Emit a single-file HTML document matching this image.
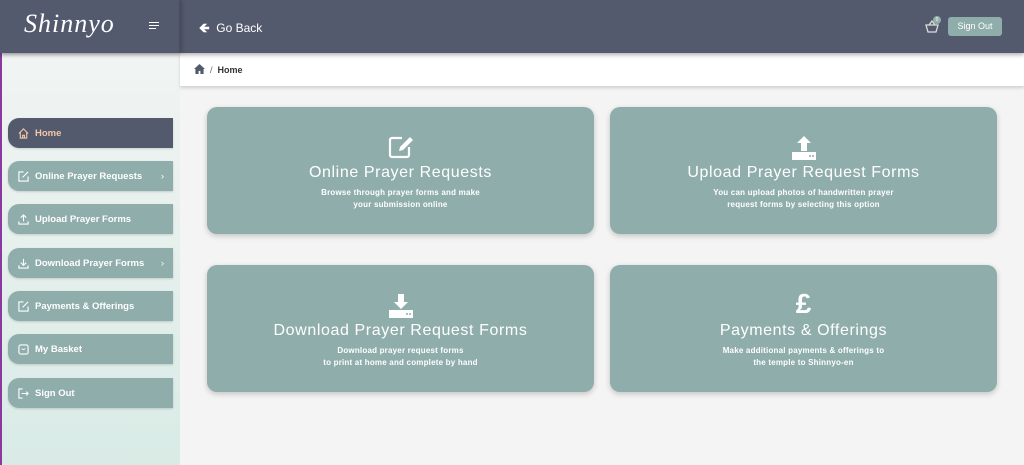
<!DOCTYPE html>
<html><head><style>
*{margin:0;padding:0;box-sizing:border-box}
body{width:1024px;height:465px;overflow:hidden;font-family:"Liberation Sans",sans-serif;background:#f4f4f4;position:relative}
.hdr{position:absolute;left:0;top:0;width:1024px;height:53px;background:#545a6d;box-shadow:0 2px 4px rgba(0,0,0,.3);z-index:2}
.lb{position:absolute;left:0;top:0;width:180px;height:53px;border-right:1px solid #4a4f60;box-shadow:2px 0 4px rgba(0,0,0,.2)}
.logo{position:absolute;left:24px;top:9px;font-family:"Liberation Serif",serif;font-style:italic;color:#fff;font-size:26px;letter-spacing:1px}
.side{position:absolute;left:0;top:53px;width:180px;height:412px;background:linear-gradient(#f1f4f3,#d9ebe6);border-left:2px solid #8a3a9e}
.nav{position:absolute;left:8px;width:165px;height:30px;background:#8fadab;border-radius:11px 0 0 11px;color:#fff;font-size:9.5px;font-weight:bold;line-height:32px;padding-left:27px;box-shadow:0 1px 2px rgba(0,0,0,.15)}
.nav.act{background:#545a6d;color:#f4c7a6}
.nav svg{position:absolute;left:10px;top:10px}
.nav .ch{position:absolute;right:9px;top:0;font-weight:normal}
.bc{position:absolute;left:180px;top:53px;width:844px;height:33px;background:#fff;box-shadow:0 2px 3px rgba(0,0,0,.15);font-size:9px;font-weight:bold;color:#333;line-height:35px;padding-left:14px}
.card{position:absolute;width:387px;height:127px;background:#8fadab;border-radius:10px;box-shadow:0 2px 6px rgba(0,0,0,.2);color:#fff;text-align:center}
.card h2{font-weight:normal;font-size:16px;letter-spacing:.6px;position:absolute;width:100%;top:57px}
.card p{font-size:8px;font-weight:bold;line-height:12px;position:absolute;width:100%;top:80px;letter-spacing:.2px}
.card svg{position:absolute;left:50%;transform:translateX(-50%);top:28px}
</style></head><body>
<div class="hdr">
 <div class="lb"><div class="logo">Shinnyo</div>
 <div style="position:absolute;left:149px;top:22px;width:10px"><div style="height:1px;background:#fff;margin-bottom:2px"></div><div style="height:1px;background:#fff;margin-bottom:2px"></div><div style="height:1px;background:#fff;width:7px"></div></div></div>
 <div style="position:absolute;left:199px;top:19px;color:#fff;font-size:12px"><b style="font-size:13px">&#129144;</b> &nbsp;Go Back</div>
 <svg style="position:absolute;left:925px;top:20px" width="14" height="14" viewBox="0 0 14 14"><path d="M1 5h12l-2 7H3z M4 5l3-4 3 4" fill="none" stroke="#ddd" stroke-width="1.3"/></svg>
 <div style="position:absolute;left:933px;top:16px;width:8px;height:8px;border-radius:50%;background:#8fadab;font-size:5px;color:#fff;text-align:center;line-height:8px">0</div>
 <div style="position:absolute;left:948px;top:17px;width:54px;height:19px;background:#8fadab;border-radius:3px;color:#fff;font-size:9px;text-align:center;line-height:19px">Sign Out</div>
</div>
<div class="side"></div>
<div class="nav act" style="top:118px"><svg width="11" height="11" viewBox="0 0 12 12"><path d="M1 6L6 1l5 5M2.5 5v6h7V5M5 11V8h2v3" fill="none" stroke="#f4c7a6" stroke-width="1.2"/></svg>Home</div>
<div class="nav" style="top:161px"><svg width="11" height="11" viewBox="0 0 12 12"><path d="M6 1H1v10h10V6M5 7l6-6" fill="none" stroke="#fff" stroke-width="1.2"/></svg>Online Prayer Requests<span class="ch">›</span></div>
<div class="nav" style="top:204px"><svg width="11" height="11" viewBox="0 0 12 12"><path d="M1 8v3h10V8M6 8V1M3 4l3-3 3 3" fill="none" stroke="#fff" stroke-width="1.2"/></svg>Upload Prayer Forms</div>
<div class="nav" style="top:248px"><svg width="11" height="11" viewBox="0 0 12 12"><path d="M1 8v3h10V8M6 1v7M3 5l3 3 3-3" fill="none" stroke="#fff" stroke-width="1.2"/></svg>Download Prayer Forms<span class="ch">›</span></div>
<div class="nav" style="top:291px"><svg width="11" height="11" viewBox="0 0 12 12"><path d="M6 1H1v10h10V6M5 7l6-6" fill="none" stroke="#fff" stroke-width="1.2"/></svg>Payments &amp; Offerings</div>
<div class="nav" style="top:334px"><svg width="11" height="11" viewBox="0 0 12 12"><rect x="1" y="1" width="10" height="10" rx="2" fill="none" stroke="#fff" stroke-width="1.2"/><path d="M4 5q2 2 4 0" fill="none" stroke="#fff"/></svg>My Basket</div>
<div class="nav" style="top:378px"><svg width="11" height="11" viewBox="0 0 12 12"><path d="M5 1H1v10h4M4 6h7M9 4l2 2-2 2" fill="none" stroke="#fff" stroke-width="1.2"/></svg>Sign Out</div>
<div class="bc"><svg width="11" height="10" viewBox="0 0 12 11" style="vertical-align:-1px"><path d="M6 0L0 5.5h1.5V11h3.5V7.5h2V11h3.5V5.5H12z" fill="#545a6d"/></svg> <span style="font-weight:normal;color:#666">&nbsp;/&nbsp;</span> Home</div>
<div class="card" style="left:207px;top:107px"><svg width="26" height="24" viewBox="0 0 26 24"><path d="M14 3H4a2 2 0 0 0-2 2v15a2 2 0 0 0 2 2h15a2 2 0 0 0 2-2V12" fill="none" stroke="#fff" stroke-width="2.2"/><path d="M22 2l3 3-10 10-4 1 1-4z" fill="#fff"/></svg><h2>Online Prayer Requests</h2><p>Browse through prayer forms and make<br>your submission online</p></div>
<div class="card" style="left:610px;top:107px"><svg width="26" height="26" viewBox="0 0 26 26"><path d="M13 1l7 7h-4v8h-6V8H6z M1 17h24v8H1z" fill="#fff"/><circle cx="19" cy="21" r="1" fill="#8fadab"/><circle cx="22" cy="21" r="1" fill="#8fadab"/></svg><h2>Upload Prayer Request Forms</h2><p>You can upload photos of handwritten prayer<br>request forms by selecting this option</p></div>
<div class="card" style="left:207px;top:265px"><svg width="26" height="26" viewBox="0 0 26 26"><path d="M10 1h6v8h4l-7 7-7-7h4z M1 17h24v8H1z" fill="#fff"/><circle cx="19" cy="21" r="1" fill="#8fadab"/><circle cx="22" cy="21" r="1" fill="#8fadab"/></svg><h2>Download Prayer Request Forms</h2><p>Download prayer request forms<br>to print at home and complete by hand</p></div>
<div class="card" style="left:610px;top:265px"><div style="position:absolute;width:100%;top:23px;font-size:28px;font-weight:bold">£</div><h2>Payments &amp; Offerings</h2><p>Make additional payments &amp; offerings to<br>the temple to Shinnyo-en</p></div>
</body></html>
